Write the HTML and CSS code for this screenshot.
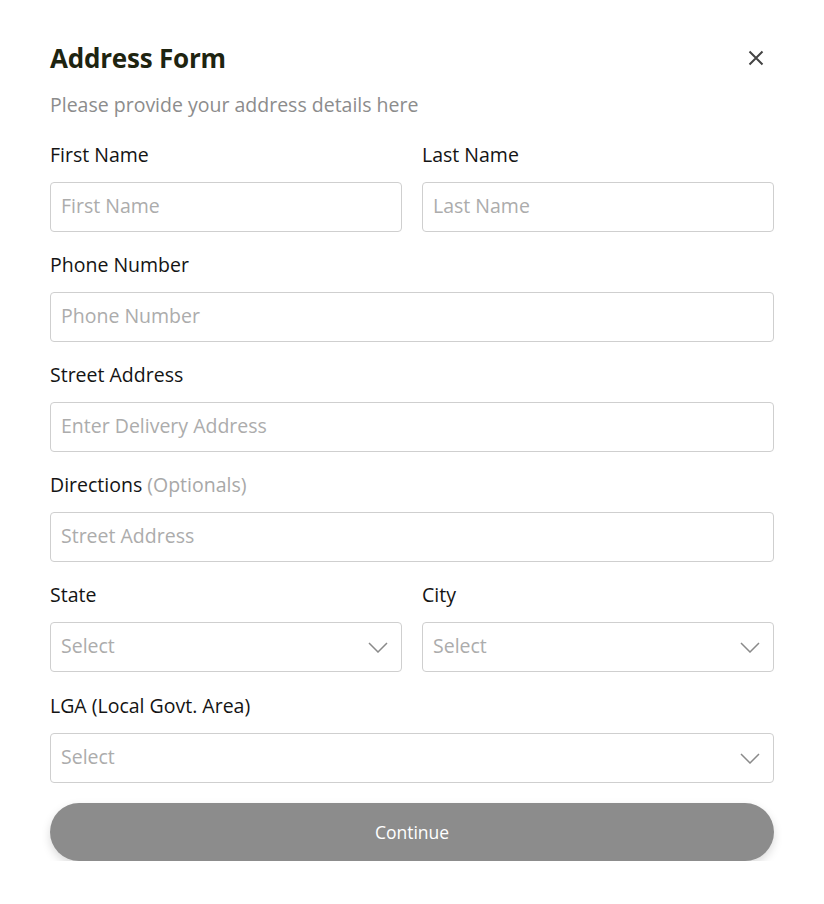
FILE: index.html
```html
<!DOCTYPE html>
<html>
<head>
<meta charset="utf-8">
<link rel="stylesheet" href="styles.css">
</head>
<body>
<div class="modal">
  <div class="header">
    <h1 class="title">Address Form</h1>
    <button class="close" aria-label="Close">
      <svg width="16" height="16" viewBox="0 0 16 16"><path d="M1.5 1.5L14.5 14.5M14.5 1.5L1.5 14.5" stroke="#444" stroke-width="2" fill="none"/></svg>
    </button>
  </div>
  <p class="subtitle">Please provide your address details here</p>
  <form class="form">
    <div class="row two">
      <div class="field">
        <label class="label">First Name</label>
        <div class="input"><span class="ph">First Name</span></div>
      </div>
      <div class="field">
        <label class="label">Last Name</label>
        <div class="input"><span class="ph">Last Name</span></div>
      </div>
    </div>
    <div class="field">
      <label class="label">Phone Number</label>
      <div class="input"><span class="ph">Phone Number</span></div>
    </div>
    <div class="field">
      <label class="label">Street Address</label>
      <div class="input"><span class="ph">Enter Delivery Address</span></div>
    </div>
    <div class="field">
      <label class="label">Directions <span class="opt">(Optionals)</span></label>
      <div class="input"><span class="ph">Street Address</span></div>
    </div>
    <div class="row two">
      <div class="field">
        <label class="label">State</label>
        <div class="input select"><span class="ph">Select</span>
          <svg class="chev" width="20" height="11" viewBox="0 0 20 11"><path d="M1 1L10 10L19 1" stroke="#8a8a8a" stroke-width="1.5" fill="none"/></svg>
        </div>
      </div>
      <div class="field">
        <label class="label">City</label>
        <div class="input select"><span class="ph">Select</span>
          <svg class="chev" width="20" height="11" viewBox="0 0 20 11"><path d="M1 1L10 10L19 1" stroke="#8a8a8a" stroke-width="1.5" fill="none"/></svg>
        </div>
      </div>
    </div>
    <div class="field lga">
      <label class="label">LGA (Local Govt. Area)</label>
      <div class="input select"><span class="ph">Select</span>
        <svg class="chev" width="20" height="11" viewBox="0 0 20 11"><path d="M1 1L10 10L19 1" stroke="#8a8a8a" stroke-width="1.5" fill="none"/></svg>
      </div>
    </div>
    <button type="button" class="btn">Continue</button>
  </form>
</div>
</body>
</html>
```

FILE: styles.css
```css
* { box-sizing: border-box; }
html, body { margin: 0; padding: 0; background: #fff; }
body { font-family: "Open Sans", "Lato", sans-serif; color: #141414; }
.modal { width: 824px; padding: 40px 50px 0 50px; }
.header { display: flex; justify-content: space-between; align-items: center; height: 36px; }
.title { margin: 0; font-size: 26px; font-weight: 700; color: #1e2410; line-height: 36px; letter-spacing: -0.2px; }
.close { background: none; border: 0; padding: 0; width: 16px; height: 16px; margin-right: 10px; display: flex; }
.subtitle { margin: 17px 0 0 0; font-size: 19.5px; line-height: 24px; color: #8c8c8c; }
.form { display: flex; flex-direction: column; margin-top: 27px; }
.row.two { display: grid; grid-template-columns: 1fr 1fr; column-gap: 20px; margin-bottom: 22px; }
.field { display: flex; flex-direction: column; margin-bottom: 22px; }
.row.two .field { margin-bottom: 0; }
.row.two + .lga { margin-top: 1px; }
.label { font-size: 19.5px; line-height: 22px; margin-bottom: 16px; color: #141414; }
.opt { color: #a8a8a8; }
.input { height: 50px; border: 1px solid #cfcfcf; border-radius: 4px; display: flex; align-items: center; padding: 0 13px 3px 10px; justify-content: space-between; }
.select { padding-bottom: 0; }
.select .ph { margin-bottom: 3px; }
.ph { font-size: 19.5px; color: #acacac; }
.btn { margin-top: -2px; height: 58px; border: 0; border-radius: 29px; background: #8c8c8c; color: #fff; font-family: inherit; font-size: 17.5px; padding-bottom: 2px; box-shadow: 0 4px 10px rgba(0,0,0,0.15); }
```
